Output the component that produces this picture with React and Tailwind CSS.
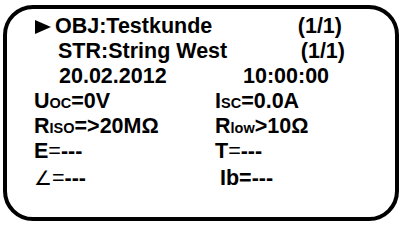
const font = { fontFamily: '"Liberation Sans", "DejaVu Sans", Arial, sans-serif' };

function Sub({ children }) {
  return <span className="text-[14.5px] leading-none">{children}</span>;
}

function Arrow() {
  return (
    <svg width="16" height="14" viewBox="0 0 16 14" className="shrink-0">
      <polygon points="0,0 16,7 0,14" fill="#000" />
    </svg>
  );
}

export default function App() {
  return (
    <div className="w-[404px] h-[228px] bg-white pt-[5px] pl-[3px]" style={font}>
      <div className="w-[396px] h-[216px] border-[4px] border-black rounded-[30px] pt-[5px] pl-[27px] text-black font-bold text-[21.5px] leading-[25px]">
        <div className="flex items-center w-[308px] h-[25px]">
          <span className="ml-[1px] mr-[4px] flex items-center"><Arrow /></span>
          <span>OBJ:Testkunde</span>
          <span className="ml-auto">(1/1)</span>
        </div>
        <div className="flex w-[311px] pl-[24px]">
          <span>STR:String West</span>
          <span className="ml-auto">(1/1)</span>
        </div>
        <div className="flex pl-[25px]">
          <span className="w-[184px]">20.02.2012</span>
          <span>10:00:00</span>
        </div>
        <div className="grid grid-cols-[181px_1fr]">
          <div>U<Sub>OC</Sub>=0V</div>
          <div>I<Sub>SC</Sub>=0.0A</div>
          <div>R<Sub>ISO</Sub>=&gt;20MΩ</div>
          <div>R<Sub>low</Sub>&gt;10Ω</div>
          <div>E<span className="font-normal">=</span>---</div>
          <div>T<span className="font-normal">=</span>---</div>
          <div className="pt-[2px]">
            <span className="font-normal text-[20px]" style={{ fontFamily: '"DejaVu Sans", sans-serif' }}>∠</span>
            <span className="font-normal">=</span>---
          </div>
          <div className="pt-[2px] pl-[5px]">Ib=---</div>
        </div>
      </div>
    </div>
  );
}
